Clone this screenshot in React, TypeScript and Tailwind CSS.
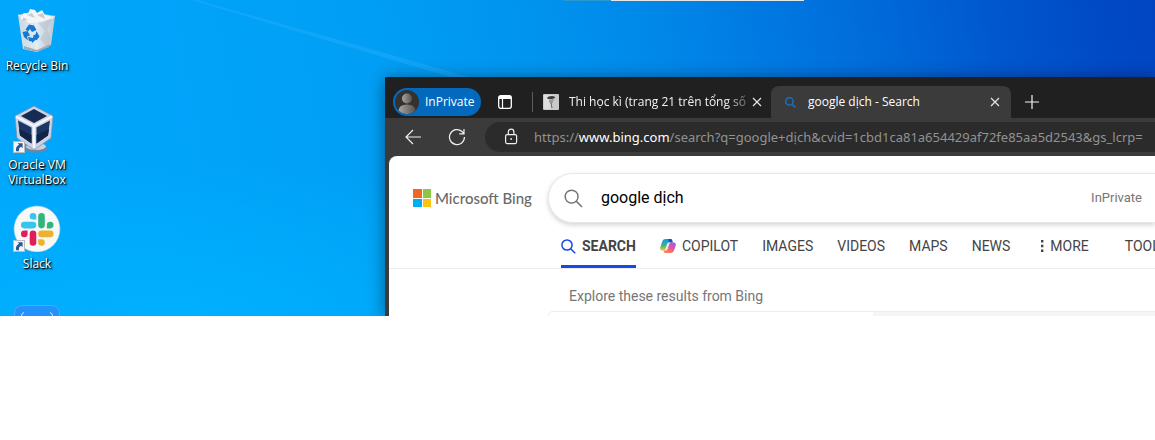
import type { ReactNode } from "react";

const uiFont = "font-['Open_Sans','Noto_Sans',sans-serif]";
const pageFont = "font-[Roboto,sans-serif]";

function ShortcutArrow() {
  return (
    <svg viewBox="0 0 12 12" className="absolute bottom-0 left-0 size-3" aria-hidden="true">
      <rect x="0.5" y="0.5" width="11" height="11" fill="#f4f5f7" stroke="#b9bcc2" />
      <path d="M4.6 2.2h5v5L8 5.700Q5.400 7 6 10.300H3.200Q1.900 5.900 6.100 3.800z" fill="#2a5794" />
    </svg>
  );
}

function RecycleIcon() {
  return (
    <svg viewBox="0 0 48 48" className="size-12" aria-hidden="true">
      <defs>
        <linearGradient id="bin" x1="0" x2="1">
          <stop offset="0" stopColor="#d3dae1" />
          <stop offset="0.5" stopColor="#eceef1" />
          <stop offset="1" stopColor="#c3cad2" />
        </linearGradient>
      </defs>
      <path d="M5 9l13-3 24 4-4 29-14 7-14-3z" fill="url(#bin)" opacity="0.95" />
      <path d="M7 12l4-5 4 1 2-5 5 1 2 3 5-3 3 5 5 1 4 2-10 4-15 1z" fill="#f5f5f6" />
      <path d="M14 9l5-2 3 5zM24 9l6-2 2 6zM10 11l5 3-5 1z" fill="#c6cbd1" />
      <path d="M5 9l18 7 19-6M23 16l1 30" fill="none" stroke="#eef3f7" strokeWidth="0.8" />
      <path d="M25 17l7 8-5 8 8 9 3-9-4-10 5-11z" fill="#b7bec6" opacity="0.5" />
      <path d="M11 40l13 4 13-6-1 3-12 5-13-3z" fill="#a4abb4" />
      <path d="M12.500 23.500l3.500-5 5 1 2.500 4.500-4.500 2-2-3-2 2.500zM23.500 25l3 5.500-3 4-3.500-5 2.500-1zM9.500 26l5-1 2.500 4.500-3 1 1 4-4-3.500zM15 31l5 1v-2l3 3.500-4 3.500v-1.500l-3-.500z" fill="#1279d4" />
    </svg>
  );
}

function VirtualBoxIcon() {
  return (
    <svg viewBox="2 0 48 48" className="size-12" aria-hidden="true">
      <ellipse cx="25" cy="43" rx="11" ry="4.500" fill="#75839c" />
      <ellipse cx="25" cy="41.500" rx="10" ry="3.500" fill="#c8d1e1" />
      <path d="M23 1L42 11 40 33 23 45 6 33 4 11z" fill="#cbd4e5" stroke="#8191ad" strokeWidth="0.8" />
      <path d="M23 4L36 11 23 18 10 11z" fill="#172c54" />
      <path d="M7 15.500L20.500 22.500V38.500L9 30.500zM39 15.500L25.500 22.500V38.500L37 30.500z" fill="#1c3766" />
      <path d="M25.500 30l12.500-6-1 6.500-11.500 8zM20.500 30L8 24l1 6.500 11.500 8z" fill="#10254a" />
      <path d="M5 11.500L23 21l18-9.500M23 21v22" fill="none" stroke="#f3f6fb" strokeWidth="2.4" />
    </svg>
  );
}

function SlackIcon() {
  return (
    <svg viewBox="0 0 48 48" className="size-12" aria-hidden="true">
      <circle cx="24" cy="25" r="23" fill="#f8f8f9" stroke="#9ccde9" strokeWidth="0.6" />
      <g transform="translate(8 9)">
        <path d="M12 0a3.300 3.300 0 100 6.600h3.300V3.300A3.300 3.300 0 0012 0zM12 8.800H3.300a3.300 3.300 0 100 6.600H12a3.300 3.300 0 100-6.600z" fill="#36c5f0" />
        <path d="M32.500 12.100a3.300 3.300 0 10-6.600 0v3.300h3.300a3.300 3.300 0 003.300-3.300zM23.800 12.100V3.300a3.300 3.300 0 10-6.600 0v8.800a3.300 3.300 0 106.600 0z" fill="#2eb67d" />
        <path d="M20.500 32.800a3.300 3.300 0 100-6.600h-3.300v3.300a3.300 3.300 0 003.300 3.300zM20.500 24.200h8.700a3.300 3.300 0 100-6.600h-8.700a3.300 3.300 0 100 6.600z" fill="#ecb22e" />
        <path d="M0 20.900a3.300 3.300 0 106.600 0v-3.300H3.300A3.300 3.300 0 000 20.900zM8.700 20.900v8.600a3.300 3.300 0 106.600 0v-8.600a3.300 3.300 0 10-6.600 0z" fill="#e01e5a" />
      </g>
    </svg>
  );
}

function DesktopIcon({ icon, label, shortcut }: { icon: ReactNode; label: string; shortcut?: boolean }) {
  return (
    <a href="#" className="flex h-[99px] flex-col items-center gap-1">
      <span className="relative block size-12">
        {icon}
        {shortcut && <ShortcutArrow />}
      </span>
      <span className="w-[72px] text-center text-[12px] leading-[15px] text-white [text-shadow:1px_1px_1px_#000,1px_1px_3px_#000]">
        {label}
      </span>
    </a>
  );
}

function Magnifier({ className, width = 1.5 }: { className: string; width?: number }) {
  return (
    <svg viewBox="0 0 20 20" className={className} fill="none" stroke="currentColor" strokeWidth={width} aria-hidden="true">
      <circle cx="8" cy="8" r="6.800" />
      <path d="M13 13l6 6" />
    </svg>
  );
}

function CloseButton({ label }: { label: string }) {
  return (
    <button aria-label={label} className="grid size-5 shrink-0 place-items-center text-[#e4e4e4]">
      <svg viewBox="0 0 10 10" className="size-[10px]" stroke="currentColor" strokeWidth="1.200" aria-hidden="true">
        <path d="M1 1l8 8M9 1l-8 8" />
      </svg>
    </button>
  );
}

function CopilotIcon() {
  return (
    <svg viewBox="0 0 16 16" className="size-4" aria-hidden="true">
      <defs>
        <linearGradient id="cpl" x1="0" y1="0" x2="0" y2="1">
          <stop offset="0" stopColor="#1598e6" />
          <stop offset="0.55" stopColor="#39b28c" />
          <stop offset="1" stopColor="#f3c82b" />
        </linearGradient>
        <linearGradient id="cpr" x1="0.700" y1="0" x2="0.300" y2="1">
          <stop offset="0" stopColor="#a65be0" />
          <stop offset="0.5" stopColor="#e8569b" />
          <stop offset="1" stopColor="#ff8648" />
        </linearGradient>
      </defs>
      <path d="M5.500 1h5.200q1 0 1.400 1.200l.7 2.300H9.600Q8.300 4.500 7.900 5.800L6.300 11q-.5 1.400-1.800 1.400H2Q-.3 12.400.2 9.600L2.300 3.200Q3.200 1 5.500 1z" fill="url(#cpl)" />
      <path d="M8 1h2.700q1 0 1.400 1.200l.7 2.300H10Q8.500 4.300 8 1z" fill="#1b4fc8" />
      <path d="M10.500 15H5.400q-1.200 0-1.500-1.200l-.5-1.400h1.100q1.500 0 2-1.500l1.700-5.100q.5-1.300 1.700-1.300H14q2.200.2 1.800 2.900l-2 5.500Q13 15 10.500 15z" fill="url(#cpr)" />
      <path d="M9.600 4.500h-1Q7.500 4.500 7 6l-1.800 5.500q-.2.700-.7.900h1.700q1.100 0 1.500-1.300l1.700-5.100q.4-1.300 1.400-1.500z" fill="#fff" opacity="0.750" />
    </svg>
  );
}

function TabStrip() {
  return (
    <div className="flex h-[41px] items-end bg-[#202020] pl-2">
      <button className="mb-[2px] flex h-7 w-[88px] shrink-0 items-center gap-[6px] rounded-full bg-[#0369bd] pl-[2px] text-[12px] font-medium text-white">
        <svg viewBox="0 0 24 24" className="size-6 shrink-0" aria-hidden="true">
          <defs>
            <linearGradient id="person" x1="0" x2="1">
              <stop offset="0" stopColor="#a8a5a2" />
              <stop offset="1" stopColor="#56524f" />
            </linearGradient>
          </defs>
          <circle cx="12" cy="12" r="12" fill="#34312f" />
          <circle cx="12" cy="8.500" r="5" fill="url(#person)" />
          <path d="M3.500 20.500Q4 14.500 12 14.500t8.500 6A12 12 0 013.500 20.500z" fill="url(#person)" />
        </svg>
        InPrivate
      </button>
      <button aria-label="Tab actions" className="mb-[6px] ml-[14px] grid size-5 shrink-0 place-items-center">
        <svg viewBox="0 0 14 14" className="size-[14px]" fill="none" stroke="#fff" aria-hidden="true">
          <rect x="0.700" y="0.700" width="12.600" height="12.600" rx="2" strokeWidth="1.300" />
          <path d="M1 2.500h12" strokeWidth="3" />
          <path d="M4.500 4v9" strokeWidth="1.200" />
        </svg>
      </button>
      <div className="mb-[6px] ml-[17px] h-5 w-px shrink-0 bg-[#5c5c5c]" />
      <div className="flex h-8 w-[238px] shrink-0 items-center pl-[10px] pr-[4px]">
        <svg viewBox="0 0 16 16" className="size-4 shrink-0" aria-hidden="true">
          <rect width="16" height="16" rx="1" fill="#c9c9c9" />
          <path d="M1 1h9L7 15H1z" fill="#dedede" />
          <path d="M4 4q1-2 5-2 3 0 3 2l-3 1H5z" fill="#3b3b3b" />
          <path d="M6 5.500l5-.5-1.500 4-1.500 1L6 8z" fill="#9a9a9a" />
          <path d="M8 9l1 5" stroke="#666" />
        </svg>
        <button className="ml-[10px] flex-1 overflow-hidden whitespace-nowrap text-left text-[12px] leading-4 text-[#f2f2f2] [mask-image:linear-gradient(90deg,#000_88%,rgba(0,0,0,0.3)_100%)]">
          Thi học kì (trang 21 trên tổng số
        </button>
        <CloseButton label="Close Thi học kì" />
      </div>
      <div className="flex h-8 w-[240px] shrink-0 items-center rounded-t-lg bg-[#3b3b3b] pl-[14px] pr-[6px] text-[#0f78d4]">
        <Magnifier className="size-[11px] shrink-0" width={2.4} />
        <button className="ml-3 flex-1 truncate text-left text-[12px] leading-4 text-white">google dịch - Search</button>
        <CloseButton label="Close google dịch - Search" />
      </div>
      <button aria-label="New tab" className="mb-[6px] ml-[11px] grid size-5 shrink-0 place-items-center">
        <svg viewBox="0 0 14 14" className="size-[14px]" stroke="#f5f5f5" strokeWidth="1.200" aria-hidden="true">
          <path d="M7 0v14M0 7h14" />
        </svg>
      </button>
    </div>
  );
}

function Toolbar() {
  return (
    <div className="flex h-[38px] items-center bg-[#3b3b3b] pl-[18px]">
      <button aria-label="Back" className="grid size-5 shrink-0 place-items-center">
        <svg viewBox="0 0 16 16" className="size-4" fill="none" stroke="#f0f0f0" strokeWidth="1.200" aria-hidden="true">
          <path d="M16 8H1M8 1L1 8l7 7" />
        </svg>
      </button>
      <button aria-label="Refresh" className="ml-6 grid size-5 shrink-0 place-items-center">
        <svg viewBox="0 0 18 18" className="size-[18px]" fill="none" stroke="#f0f0f0" strokeWidth="1.200" aria-hidden="true">
          <path d="M16.500 9A7.500 7.500 0 1114 3.500l2 2M16 1v4.800h-4.800" />
        </svg>
      </button>
      <div className="ml-[18px] flex h-[30px] min-w-0 flex-1 items-center rounded-l-full bg-[#2b2b2b] pl-[18px]">
        <svg viewBox="0 0 16 18" className="h-[18px] w-4 shrink-0" fill="none" stroke="#f0f0f0" strokeWidth="1.200" aria-hidden="true">
          <rect x="2.600" y="6.600" width="11" height="9" rx="1.500" />
          <path d="M5.300 6.500V4a2.800 2.800 0 015.600 0v2.500" />
          <circle cx="8.100" cy="11" r="0.900" fill="#f0f0f0" stroke="none" />
        </svg>
        <div
          role="textbox"
          aria-label="Address"
          tabIndex={0}
          className="ml-[15px] min-w-0 flex-1 overflow-hidden whitespace-nowrap font-['Noto_Sans',sans-serif] text-[13px] leading-5 text-[#929292]"
        >
          https://<span className="text-white">www.bing.com</span>
          /search?q=google+dịch&amp;cvid=1cbd1ca81a654429af72fe85aa5d2543&amp;gs_lcrp=
        </div>
      </div>
    </div>
  );
}

function NavItem({ children }: { children: ReactNode }) {
  return (
    <a href="#" className="flex h-full shrink-0 items-center gap-[6px]">
      {children}
    </a>
  );
}

function BingPage() {
  return (
    <main className={`ml-1 overflow-hidden rounded-tl-lg bg-white pt-[17px] ${pageFont}`}>
      <div className="flex items-center pl-6">
        <a href="#" className="flex w-[135px] shrink-0 items-center gap-1">
          <span className="grid size-[18px] shrink-0 grid-cols-2 gap-px">
            <span className="bg-[#f26522]" />
            <span className="bg-[#8dc63f]" />
            <span className="bg-[#00aeef]" />
            <span className="bg-[#ffc20e]" />
          </span>
          <span className="whitespace-nowrap font-[Lato,sans-serif] text-[15px] font-medium leading-5 text-[#6a6a6a]">Microsoft Bing</span>
        </a>
        <form
          role="search"
          className="flex h-[50px] min-w-0 flex-1 items-center rounded-l-full border border-r-0 border-[#e8e8e8] bg-white pl-[15px] pr-[13px] text-[#767676] shadow-[0_2px_5px_rgba(0,0,0,0.18)]"
        >
          <Magnifier className="size-[19px] shrink-0" width={1.6} />
          <input
            type="text"
            aria-label="Search the web"
            defaultValue="google dịch"
            className="ml-[18px] min-w-0 flex-1 bg-transparent text-[16px] leading-6 text-black outline-none"
          />
          <span className="text-[13px]">InPrivate</span>
        </form>
      </div>
      <nav className="flex h-[46px] items-center gap-6 overflow-hidden whitespace-nowrap border-b border-[#ececec] pl-[172px] text-[14px] leading-5 text-[#444]">
        <a
          href="#"
          aria-current="page"
          className="flex h-full shrink-0 items-center gap-[6px] border-b-[3px] border-[#174ae4] pt-[3px] font-bold"
        >
          <Magnifier className="mt-[2px] size-[15px] text-[#174ae4]" width={2} />
          SEARCH
        </a>
        <NavItem>
          <CopilotIcon />
          COPILOT
        </NavItem>
        <NavItem>IMAGES</NavItem>
        <NavItem>VIDEOS</NavItem>
        <NavItem>MAPS</NavItem>
        <NavItem>NEWS</NavItem>
        <button className="flex shrink-0 items-center gap-[6px] pl-[6px]">
          <svg viewBox="0 0 4 12" className="h-3 w-1" fill="#444" aria-hidden="true">
            <path d="M1 0h2.400v2.400H1zM1 4.800h2.400v2.400H1zM1 9.600h2.400V12H1z" />
          </svg>
          MORE
        </button>
        <button className="ml-3 shrink-0">TOOLS</button>
      </nav>
      <section className="pt-[17px]">
        <h2 className="pl-[180px] text-[14px] leading-5 text-[#767676]">Explore these results from Bing</h2>
        <div className="ml-[159px] mt-[5px] flex h-[5px] rounded-tl-md border-l border-t border-[#ececec]">
          <div className="w-[324px] shrink-0" />
          <div className="flex-1 bg-[#f5f5f5]" />
        </div>
      </section>
    </main>
  );
}

export default function App() {
  return (
    <div className={`min-h-screen bg-white ${uiFont}`}>
      <div className="relative flex overflow-hidden bg-[linear-gradient(80deg,#00a8fc_0%,#00a5fa_14%,#009ff5_34%,#0093ee_49%,#0087e8_59%,#0075e0_70%,#0068d8_78%,#0058cf_86%,#004ac6_95%,#0340bd_105%)]">
        <div className="absolute inset-0 bg-[radial-gradient(ellipse_at_15%_100%,rgba(0,178,255,0.85),rgba(0,178,255,0)_35%)]" />
        <svg className="absolute left-[180px] top-0 h-[90px] w-[300px]" viewBox="0 0 300 90" aria-hidden="true">
          <path d="M17 0L300 80v6L11 0z" fill="#2bb0ff" opacity="0.4" />
        </svg>
        <div className="absolute left-[563px] top-0 flex h-px w-[241px]">
          <div className="w-12 bg-[#2b98cc]" />
          <div className="flex-1 bg-[#e6e6e6]" />
        </div>
        <aside className="relative flex w-[74px] shrink-0 flex-col pt-[6px]">
          <DesktopIcon icon={<RecycleIcon />} label="Recycle Bin" />
          <DesktopIcon icon={<VirtualBoxIcon />} label="Oracle VM VirtualBox" shortcut />
          <DesktopIcon icon={<SlackIcon />} label="Slack" shortcut />
          <a href="#" aria-label="Screen capture" className="flex h-[13px] items-end justify-center overflow-hidden">
            <svg viewBox="0 0 46 11" className="h-[11px] w-[46px]" aria-hidden="true">
              <path d="M0 11V9Q0 0 9 0h28q9 0 9 9v2z" fill="#2393fb" />
              <path d="M0.500 11V9Q.5.500 9 .5h28q8.500 0 8.500 8.500v2" fill="none" stroke="#4dabff" />
              <path d="M7.500 11q0-3 2.500-3.500M38.500 11q0-3-2.500-3.500" fill="none" stroke="#cfe8ff" />
            </svg>
          </a>
        </aside>
        <div className="relative ml-[311px] mt-[77px] min-w-0 flex-1 bg-[#3b3b3b] shadow-[0_2px_16px_rgba(0,0,0,0.45)]">
          <TabStrip />
          <Toolbar />
          <BingPage />
        </div>
      </div>
    </div>
  );
}
